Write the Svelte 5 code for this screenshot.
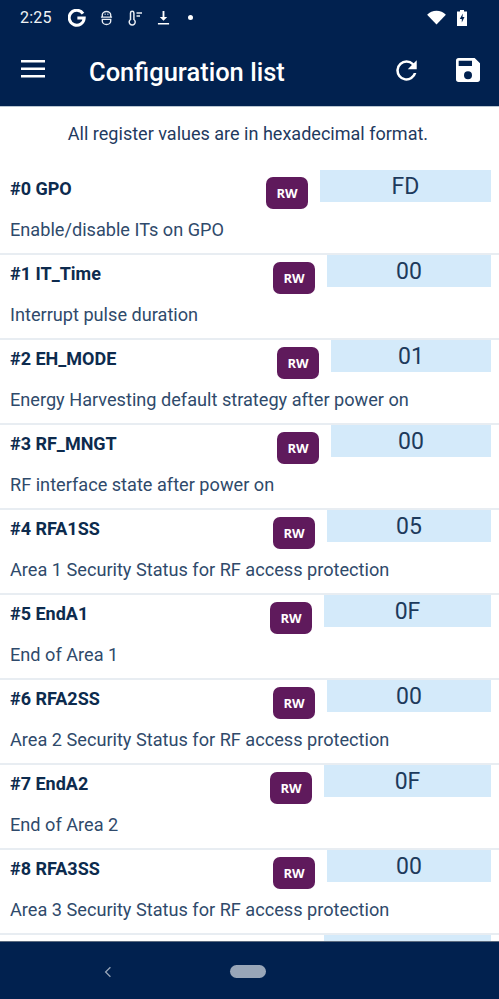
<script>
	const registers = [
		{ name: '#0 GPO', desc: 'Enable/disable ITs on GPO', value: 'FD', box: 171 },
		{ name: '#1 IT_Time', desc: 'Interrupt pulse duration', value: '00', box: 164 },
		{ name: '#2 EH_MODE', desc: 'Energy Harvesting default strategy after power on', value: '01', box: 160 },
		{ name: '#3 RF_MNGT', desc: 'RF interface state after power on', value: '00', box: 160 },
		{ name: '#4 RFA1SS', desc: 'Area 1 Security Status for RF access protection', value: '05', box: 164 },
		{ name: '#5 EndA1', desc: 'End of Area 1', value: '0F', box: 167 },
		{ name: '#6 RFA2SS', desc: 'Area 2 Security Status for RF access protection', value: '00', box: 164 },
		{ name: '#7 EndA2', desc: 'End of Area 2', value: '0F', box: 167 },
		{ name: '#8 RFA3SS', desc: 'Area 3 Security Status for RF access protection', value: '00', box: 164 }
	]
</script>

<div class="phone">
	<header class="top">
		<div class="status">
			<span class="time">2:25</span>
			<svg class="ic-g" viewBox="0 0 24 24" width="18" height="18"><path fill="none" stroke="#fff" stroke-width="4" d="M20 6.200A10 10 0 1 0 21.600 12H12.500"/></svg>
			<svg viewBox="0 0 14 16" width="13" height="16" fill="none" stroke="#e8ecf2" stroke-width="1.500"><path d="M2.500 6.500V4.500a4.500 3.500 0 0 1 9 0v2M1 7h12M2.500 9.500v2a4.500 3.500 0 0 0 9 0v-2zM5 4h1M8 4h1"/></svg>
			<svg viewBox="0 0 16 16" width="16" height="16" fill="none" stroke="#e8ecf2" stroke-width="1.500"><path d="M3.500 9.500V3a1.700 1.700 0 0 1 3.400 0v6.500a3 3 0 1 1-3.400 0zM9.500 3H15M9.500 6H13"/></svg>
			<svg viewBox="0 0 14 16" width="13" height="17" fill="#fff"><path d="M6 1h2v6.500h3L7 11.500 3 7.500h3zM1 14h12v1.500H1z"/></svg>
			<span class="dot"></span>
			<span class="spacer"></span>
			<svg viewBox="0 0 20 16" width="19" height="15" fill="#fff"><path d="M0 5a14 14 0 0 1 20 0L10 15.500z"/></svg>
			<svg class="batt" viewBox="0 0 10 16" width="10" height="16"><path fill="#fff" d="M3 0h4v1.500h3V16H0V1.500h3z"/><path fill="#01214f" d="M5.800 3.500 2.800 9h2v3.500L7.500 7h-2z"/></svg>
		</div>
		<div class="toolbar">
			<svg class="menu" viewBox="0 0 24 18" width="24" height="18" fill="#fff"><path d="M0 0h24v2.500H0zM0 7.500h24V10H0zM0 15h24v2.500H0z"/></svg>
			<h1>Configuration list</h1>
			<svg class="refresh" viewBox="3 3 18 18" width="23" height="23"><path fill="#fff" d="M17.650 6.350A8 8 0 0 0 12 4a8 8 0 1 0 7.730 10h-2.080A6 6 0 1 1 12 6c1.660 0 3.140.69 4.220 1.780L13 11h7V4z"/></svg>
			<svg class="save" viewBox="3 3 18 18" width="24" height="24"><path fill="#fff" d="M17 3H5a2 2 0 0 0-2 2v14a2 2 0 0 0 2 2h14a2 2 0 0 0 2-2V7zm-5 16a3 3 0 1 1 0-6 3 3 0 0 1 0 6zm3-10H5V5h10z"/></svg>
		</div>
	</header>

	<main class="content">
		<p class="note">All register values are in hexadecimal format.</p>
		{#each registers as reg}
			<section class="row">
				<div class="head">
					<span class="name">{reg.name}</span>
					<span class="badge">RW</span>
					<span class="value" style="width: {reg.box}px">{reg.value}</span>
				</div>
				<div class="desc">{reg.desc}</div>
			</section>
		{/each}
		<section class="row">
			<div class="head">
				<span class="name"></span>
				<span class="value" style="width: 167px"></span>
			</div>
		</section>
	</main>

	<footer class="nav">
		<svg viewBox="0 0 10 14" width="8" height="12" fill="none" stroke="#99a6b8" stroke-width="1.600"><path d="M8 1 2 7l6 6"/></svg>
		<span class="pill"></span>
	</footer>
</div>

<style>
	:global(body) {
		margin: 0;
		background: #fff;
	}

	.phone {
		width: 499px;
		height: 999px;
		display: flex;
		flex-direction: column;
		overflow: hidden;
		font-family: Roboto, sans-serif;
		color: #03234b;
	}

	.top {
		flex: none;
		height: 106px;
		background: #01214f;
		color: #fff;
		border-bottom: 1px solid #b9c6d2;
	}

	.status {
		height: 35px;
		display: flex;
		align-items: center;
		padding: 0 32px 0 20px;
		gap: 14px;
	}

	.time {
		font-size: 16px;
		letter-spacing: 0.2px;
		margin-right: 2px;
		color: #f0f2f5;
	}

	.dot {
		width: 5px;
		height: 5px;
		border-radius: 50%;
		background: #fff;
		margin-left: 4px;
	}

	.spacer {
		flex: 1;
	}

	.batt {
		margin-left: -3px;
	}

	.toolbar {
		height: 71px;
		display: flex;
		align-items: center;
		padding: 0 19px 0 21px;
	}

	.menu {
		margin-bottom: 4px;
	}

	h1 {
		flex: 1;
		margin: 2px 0 0 44px;
		font-size: 25.500px;
		font-weight: 500;
	}

	.refresh {
		margin: 0 38px 0 0;
	}

	.save {
		margin-bottom: 2px;
	}

	.content {
		flex: 1;
		min-height: 0;
		overflow: hidden;
	}

	.note {
		margin: 0;
		height: 63px;
		padding: 17px 3px 0 0;
		box-sizing: border-box;
		text-align: center;
		font-size: 18.050px;
		line-height: 20px;
		color: #1f3a5f;
	}

	.row {
		height: 85px;
		box-sizing: border-box;
		padding: 0 8px 0 10px;
		border-bottom: 2px solid #e8edf2;
	}

	.head {
		display: flex;
		align-items: flex-start;
		height: 50px;
	}

	.name {
		flex: 1;
		font-size: 18px;
		font-weight: 700;
		line-height: 20px;
		margin-top: 9px;
		color: #0d2b4e;
	}

	.badge {
		width: 42px;
		height: 32px;
		margin: 7px 12px 0 0;
		border-radius: 7px;
		background: #5f1a5c;
		color: #fff;
		font-family: "Open Sans", sans-serif;
		font-size: 13px;
		font-weight: 700;
		line-height: 32px;
		text-align: center;
	}

	.value {
		height: 31.500px;
		background: #d4eafa;
		font-size: 23px;
		line-height: 34px;
		text-align: center;
		color: #1d3a5c;
	}

	.desc {
		font-size: 18.150px;
		line-height: 20px;
		color: #2f4a6b;
	}

	.nav {
		flex: none;
		height: 58px;
		background: #01214f;
		display: flex;
		align-items: center;
		padding: 2px 0 0 104px;
		border-top: 1px solid #5c6b7f;
		box-sizing: border-box;
		gap: 118px;
	}

	.pill {
		width: 36px;
		height: 13px;
		border-radius: 7px;
		background: #99a6b8;
	}
</style>
